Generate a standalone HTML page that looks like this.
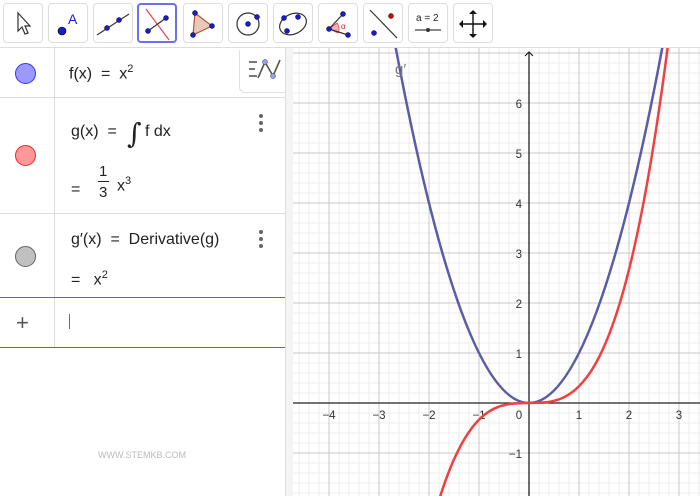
<!DOCTYPE html>
<html><head><meta charset="utf-8"><style>
body{margin:0;width:700px;height:496px;overflow:hidden;background:#fff;font-family:"Liberation Sans",sans-serif;position:relative}
.tb{position:absolute;left:0;top:0;width:700px;height:47px;background:#fff;border-bottom:1px solid #ddd}
.b{position:absolute;top:3px;width:38px;height:38px;border:1px solid #ddd;border-radius:4px;background:#fff}
.b.sel{border:2px solid #6e6ef0;width:36px;height:36px}
.b svg{position:absolute;left:0;top:0}
.alg{position:absolute;left:0;top:48px;width:285px;height:448px;background:#fff}
.row{position:absolute;left:0;width:285px;border-bottom:1px solid #ddd}
.vl{position:absolute;left:54px;top:0;width:1px;height:300px;background:#ddd}
.dot{position:absolute;left:15px;width:19px;height:19px;border-radius:50%}
.t{position:absolute;font-size:16px;color:#222;white-space:nowrap}
.menu{position:absolute;left:259px;width:4px}
.menu i{display:block;width:4px;height:4px;border-radius:50%;background:#666;margin-bottom:3px}
.split{position:absolute;left:285px;top:48px;width:7px;height:448px;background:#f4f4f4;border-left:1px solid #ddd}
</style></head><body>
<div class="tb">
<div class="b" style="left:3px"><svg width="38" height="38"><path d="M14 9 L14 27 L18 23 L21 30 L24 29 L21 22 L26 22 Z" fill="#fff" stroke="#333" stroke-width="1.2"/></svg></div>
<div class="b" style="left:48px"><svg width="38" height="38"><circle cx="13" cy="27" r="4" fill="#1a1ad0" stroke="#000" stroke-width=".6"/><text x="19" y="20" font-size="14" fill="#1a1ae0" font-family="Liberation Sans">A</text></svg></div>
<div class="b" style="left:93px"><svg width="38" height="38"><line x1="3" y1="31" x2="35" y2="10" stroke="#333" stroke-width="1.2"/><circle cx="13" cy="24" r="2.5" fill="#1a1ad0" stroke="#000" stroke-width=".5"/><circle cx="25" cy="16" r="2.5" fill="#1a1ad0" stroke="#000" stroke-width=".5"/></svg></div>
<div class="b sel" style="left:137px"><svg width="36" height="36"><line x1="7" y1="4" x2="30" y2="35" stroke="#e44" stroke-width="1.2"/><line x1="9" y1="26" x2="27" y2="13" stroke="#333" stroke-width="1.2"/><circle cx="9" cy="26" r="2.5" fill="#1a1ad0" stroke="#000" stroke-width=".5"/><circle cx="27" cy="13" r="2.5" fill="#1a1ad0" stroke="#000" stroke-width=".5"/></svg></div>
<div class="b" style="left:183px"><svg width="38" height="38"><path d="M11 9 L28 22 L9 31 Z" fill="#e8c8b8" stroke="#b05a30" stroke-width="1.2"/><circle cx="11" cy="9" r="2.5" fill="#1a1ad0" stroke="#000" stroke-width=".5"/><circle cx="28" cy="22" r="2.5" fill="#1a1ad0" stroke="#000" stroke-width=".5"/><circle cx="9" cy="31" r="2.5" fill="#1a1ad0" stroke="#000" stroke-width=".5"/></svg></div>
<div class="b" style="left:228px"><svg width="38" height="38"><circle cx="19" cy="20" r="11" fill="none" stroke="#333" stroke-width="1.2"/><circle cx="19" cy="20" r="2.5" fill="#1a1ad0" stroke="#000" stroke-width=".5"/><circle cx="28" cy="13" r="2.5" fill="#1a1ad0" stroke="#000" stroke-width=".5"/></svg></div>
<div class="b" style="left:273px"><svg width="38" height="38"><ellipse cx="19" cy="20" rx="14" ry="10" transform="rotate(-25 19 20)" fill="none" stroke="#333" stroke-width="1.2"/><circle cx="10" cy="14" r="2.5" fill="#1a1ad0" stroke="#000" stroke-width=".5"/><circle cx="24" cy="13" r="2.5" fill="#1a1ad0" stroke="#000" stroke-width=".5"/><circle cx="13" cy="27" r="2.5" fill="#1a1ad0" stroke="#000" stroke-width=".5"/></svg></div>
<div class="b" style="left:318px"><svg width="38" height="38"><path d="M10 25 L18 19 A9 9 0 0 1 19 29 Z" fill="#f4b0b0" stroke="#e44" stroke-width=".8"/><polyline points="24,10 10,25 29,31" fill="none" stroke="#333" stroke-width="1.2"/><circle cx="24" cy="10" r="2.5" fill="#1a1ad0" stroke="#000" stroke-width=".5"/><circle cx="10" cy="25" r="2.5" fill="#1a1ad0" stroke="#000" stroke-width=".5"/><circle cx="29" cy="31" r="2.5" fill="#1a1ad0" stroke="#000" stroke-width=".5"/><text x="22" y="25" font-size="8" fill="#e22">α</text></svg></div>
<div class="b" style="left:363px"><svg width="38" height="38"><line x1="6" y1="6" x2="33" y2="34" stroke="#333" stroke-width="1.2"/><circle cx="10" cy="29" r="2.5" fill="#1a1ad0" stroke="#000" stroke-width=".5"/><circle cx="27" cy="12" r="2.5" fill="#d00" stroke="#000" stroke-width=".5"/></svg></div>
<div class="b" style="left:408px"><svg width="38" height="38"><text x="7" y="17" font-size="10" fill="#222" font-family="Liberation Sans">a = 2</text><line x1="6" y1="26" x2="32" y2="26" stroke="#444" stroke-width="1.2"/><circle cx="19" cy="26" r="2" fill="#333"/></svg></div>
<div class="b" style="left:453px"><svg width="38" height="38"><path d="M19 8 V32 M7 20 H31" stroke="#111" stroke-width="1.4"/><path d="M19 6 l-4 4 h8z M19 34 l-4 -4 h8z M5 20 l4 -4 v8z M33 20 l-4 -4 v8z" fill="#111"/></svg></div>
</div>

<div class="alg">
<div class="vl"></div>
<div class="row" style="top:0;height:49px">
<div class="dot" style="top:15px;background:#9999ff;border:1px solid #3333ff"></div>
<div class="t" style="left:69px;top:15px">f(x) &nbsp;=&nbsp; x<sup style="font-size:11px">2</sup></div>
</div>
<div class="row" style="top:49px;height:116px">
<div class="dot" style="top:48px;background:#ff9999;border:1px solid #ff2222"></div>
<div class="t" style="left:71px;top:26px">g(x) &nbsp;=&nbsp;</div>
<div class="t" style="left:127px;top:20px;font-size:28px;font-family:'DejaVu Serif',serif">∫</div>
<div class="t" style="left:145px;top:26px">f dx</div>
<div class="t" style="left:71px;top:84px">=</div>
<div class="t" style="left:99px;top:66px;font-size:15px">1</div>
<div style="position:absolute;left:98px;top:84px;width:11px;height:1px;background:#222"></div>
<div class="t" style="left:99px;top:87px;font-size:15px">3</div>
<div class="t" style="left:117px;top:78px">x<sup style="font-size:11px">3</sup></div>
<div class="menu" style="top:17px"><i></i><i></i><i></i></div>
</div>
<div class="row" style="top:166px;height:83px">
<div class="dot" style="top:32px;background:#c0c0c0;border:1px solid #666"></div>
<div class="t" style="left:71px;top:17px">g′(x) &nbsp;=&nbsp; Derivative(g)</div>
<div class="t" style="left:71px;top:55px">= &nbsp; x<sup style="font-size:11px">2</sup></div>
<div class="menu" style="top:16px"><i></i><i></i><i></i></div>
</div>
<div style="position:absolute;left:0;top:249px;width:285px;height:1px;background:#6a5acd"></div>
<div class="t" style="left:16px;top:262px;font-size:22px;color:#555;font-weight:300">+</div>
<div style="position:absolute;left:69px;top:266px;width:1px;height:15px;background:#6a5acd"></div>
<div style="position:absolute;left:0;top:299px;width:285px;height:1px;background:#6a5acd"></div>
<div style="position:absolute;left:0;top:250px;width:285px;height:49px"><div style="position:absolute;left:54px;top:0;width:1px;height:49px;background:#ddd"></div></div>
<div class="t" style="left:98px;top:402px;font-size:9px;color:#bbb">WWW.STEMKB.COM</div>
</div>
<div style="position:absolute;left:239px;top:50px;width:46px;height:42px;background:#fff;border:1px solid #e0e0e0;border-right:none;border-top:none;border-radius:0 0 0 6px">
<svg width="46" height="42"><path d="M9 12h8M9 19h6M9 26h8" stroke="#777" stroke-width="2"/><path d="M18 28 L25 12 L33 26 L40 10" fill="none" stroke="#555" stroke-width="1.6"/><circle cx="25" cy="12" r="2.5" fill="#9999ff" stroke="#333" stroke-width=".5"/><circle cx="33" cy="26" r="2.5" fill="#9999ff" stroke="#333" stroke-width=".5"/></svg></div>
<div class="split"></div>

<svg style="position:absolute;left:293px;top:48px" width="407" height="448" viewBox="293 48 407 448">
<rect x="293" y="48" width="407" height="448" fill="#fff"/>
<g stroke="#eeeeee" stroke-width="1">
<path d="M299 48V496M309 48V496M319 48V496M339 48V496M349 48V496M359 48V496M369 48V496M389 48V496M399 48V496M409 48V496M419 48V496M439 48V496M449 48V496M459 48V496M469 48V496M489 48V496M499 48V496M509 48V496M519 48V496M539 48V496M549 48V496M559 48V496M569 48V496M589 48V496M599 48V496M609 48V496M619 48V496M639 48V496M649 48V496M659 48V496M669 48V496M689 48V496M699 48V496"/>
<path d="M293 63H700M293 73H700M293 83H700M293 93H700M293 113H700M293 123H700M293 133H700M293 143H700M293 163H700M293 173H700M293 183H700M293 193H700M293 213H700M293 223H700M293 233H700M293 243H700M293 263H700M293 273H700M293 283H700M293 293H700M293 313H700M293 323H700M293 333H700M293 343H700M293 363H700M293 373H700M293 383H700M293 393H700M293 413H700M293 423H700M293 433H700M293 443H700M293 463H700M293 473H700M293 483H700M293 493H700"/>
</g>
<g stroke="#c8c8c8" stroke-width="1">
<path d="M329 48V496M379 48V496M429 48V496M479 48V496M579 48V496M629 48V496M679 48V496"/>
<path d="M293 53H700M293 103H700M293 153H700M293 203H700M293 253H700M293 303H700M293 353H700M293 453H700"/>
</g>
<path d="M293 403H700M529 52V496" stroke="#222" stroke-width="1.3"/>
<path d="M525 56L529 52L533 56" fill="none" stroke="#222" stroke-width="1.2"/>
<g font-size="11.5" fill="#333" font-family="Liberation Sans" text-anchor="middle">
<text x="329" y="419">−4</text><text x="379" y="419">−3</text><text x="429" y="419">−2</text><text x="479" y="419">−1</text><text x="519" y="419">0</text><text x="579" y="419">1</text><text x="629" y="419">2</text><text x="679" y="419">3</text>
<g text-anchor="end"><text x="522" y="108">6</text><text x="522" y="158">5</text><text x="522" y="208">4</text><text x="522" y="258">3</text><text x="522" y="308">2</text><text x="522" y="358">1</text><text x="522" y="458">−1</text></g>
</g>
<path d="M394 38.5 Q529 767.5 664 38.5" fill="none" stroke="#5c5ca4" stroke-width="2.5"/>
<path d="M439 500.2 C515.7 251.8 592.3 638.2 669 37.1" fill="none" stroke="#f04040" stroke-width="2.5"/>
<text x="395" y="74" font-size="15" fill="#777" font-family="Liberation Sans">g′</text>
</svg>
</body></html>
